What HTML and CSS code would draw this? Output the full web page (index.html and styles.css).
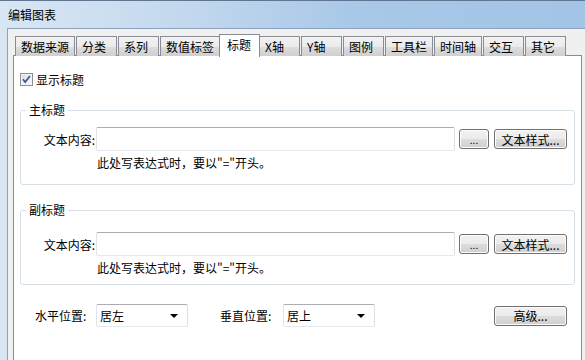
FILE: index.html
```html
<!DOCTYPE html>
<html lang="zh-CN">
  <head>
    <meta charset="UTF-8" />
    <meta name="viewport" content="width=device-width, initial-scale=1.0" />
    <title>编辑图表</title>
    <link rel="stylesheet" href="styles.css">
  </head>
  <body>
    <div class="window">
      <div class="titlebar">编辑图表</div>
      <div class="client">
        <!-- tabs -->
        <div class="tabs">
          <div class="tab">数据来源</div>
          <div class="tab">分类</div>
          <div class="tab">系列</div>
          <div class="tab">数值标签</div>
          <div class="tab active">标题</div>
          <div class="tab">X轴</div>
          <div class="tab">Y轴</div>
          <div class="tab">图例</div>
          <div class="tab">工具栏</div>
          <div class="tab">时间轴</div>
          <div class="tab">交互</div>
          <div class="tab">其它</div>
        </div>

        <div class="panel">
          <label class="check-row">
            <svg class="checkbox" width="13" height="13" viewBox="0 0 13 13">
              <defs>
                <linearGradient id="cbg" x1="0" y1="0" x2="1" y2="1">
                  <stop offset="0" stop-color="#dcdcdc" />
                  <stop offset="1" stop-color="#fbfbfb" />
                </linearGradient>
              </defs>
              <rect x="0.5" y="0.5" width="12" height="12" fill="#f4f4f4" stroke="#8f8f8f" />
              <rect x="2" y="2" width="9" height="9" fill="url(#cbg)" />
              <path d="M3 6.2 L5.2 9 L10 3" fill="none" stroke="#3d58a0" stroke-width="1.8" />
            </svg>
            <span>显示标题</span>
          </label>

          <fieldset class="group group-main">
            <legend>主标题</legend>
            <div class="field-row">
              <span class="field-label">文本内容:</span>
              <input class="textbox" type="text" value="" />
              <button class="btn btn-small">...</button>
              <button class="btn btn-style">文本样式...</button>
            </div>
            <div class="hint">此处写表达式时，要以"="开头。</div>
          </fieldset>

          <fieldset class="group group-sub">
            <legend>副标题</legend>
            <div class="field-row">
              <span class="field-label">文本内容:</span>
              <input class="textbox" type="text" value="" />
              <button class="btn btn-small">...</button>
              <button class="btn btn-style">文本样式...</button>
            </div>
            <div class="hint">此处写表达式时，要以"="开头。</div>
          </fieldset>

          <div class="position-row">
            <span class="pos-label">水平位置:</span>
            <div class="combo">居左</div>
            <span class="pos-label pos-label-v">垂直位置:</span>
            <div class="combo">居上</div>
            <button class="btn btn-style btn-adv">高级...</button>
          </div>
        </div>
      </div>
    </div>
  </body>
</html>
```

FILE: styles.css
```css
* {
  box-sizing: border-box;
}

body {
  margin: 0;
  font-family: "Noto Sans CJK SC", "Liberation Sans", sans-serif;
  font-size: 12px;
  color: #000;
  overflow: hidden;
}

.window {
  width: 585px;
  height: 360px;
  display: flex;
  flex-direction: column;
  background: linear-gradient(to right, #d9e6f3 0%, #c4d9ee 30%, #a9c8e8 60%, #a3c4e6 100%);
  border-top: 1px solid #5f7590;
}

.titlebar {
  height: 27px;
  line-height: 28px;
  padding-left: 8px;
  font-size: 12px;
}

.client {
  flex: 1;
  margin-left: 7px;
  background: #f0f0f0;
  border-top: 1px solid #8ea4bd;
  border-left: 1px solid #8ea4bd;
  padding: 5px 0 0 5px;
  overflow: hidden;
}

/* tab strip */
.tabs {
  display: flex;
  align-items: flex-end;
  gap: 1px;
  height: 22px;
  padding-left: 2px;
  position: relative;
  z-index: 1;
}

.tab {
  height: 20px;
  min-width: 41px;
  padding: 0 5px;
  line-height: 19px;
  border: 1px solid #898c95;
  border-bottom: none;
  background: linear-gradient(#f2f2f2, #ebebeb 50%, #dddddd 51%, #cfcfcf);
  white-space: nowrap;
}

.tab.active {
  height: 23px;
  margin: 0 -2px -1px;
  padding: 0 7px;
  line-height: 20px;
  background: #fff;
}

/* tab page */
.panel {
  width: 569px;
  height: 320px;
  margin-top: -1px;
  background: #fff;
  border: 1px solid #898c95;
  padding: 15px 6px 0;
}

.check-row {
  display: flex;
  align-items: center;
  gap: 3px;
  height: 16px;
}

.checkbox {
  display: block;
}

.group {
  margin: 15px 0 0;
  height: 83px;
  border: 1px solid #d5dfe5;
  border-radius: 3px;
  padding: 9px 7px 0 0;
}

.group legend {
  margin-left: 5px;
  padding: 0 3px;
  line-height: 16px;
}

.group-sub {
  margin-top: 17px;
  padding-top: 14px;
}

.field-row {
  display: flex;
  align-items: center;
}

.field-label {
  width: 75px;
  text-align: right;
  padding-right: 1px;
}

.textbox {
  width: 359px;
  height: 24px;
  margin: 0 0 0 0;
  border: 1px solid #abadb3;
  border-color: #abadb3 #dbdfe6 #e3e9ef #e2e3ea;
  border-radius: 2px;
  font: inherit;
  outline: none;
}

.btn {
  height: 20px;
  padding: 0;
  font: inherit;
  border: 1px solid #707070;
  border-radius: 3px;
  background: linear-gradient(#f2f2f2, #ebebeb 50%, #dddddd 51%, #cfcfcf);
  box-shadow: inset 0 0 0 1px #fcfcfc;
  color: #000;
}

.btn-small {
  width: 30px;
  margin-left: 4px;
  font-size: 10px;
}

.btn-style {
  width: 73px;
  margin-left: 5px;
}

.hint {
  margin-top: 4px;
  padding-left: 76px;
  line-height: 16px;
}

/* bottom row */
.position-row {
  display: flex;
  align-items: center;
  margin-top: 19px;
  padding-left: 15px;
}

.pos-label {
  flex: none;
  width: 61px;
}

.pos-label-v {
  margin-left: 32px;
  width: 63px;
}

.combo {
  position: relative;
  flex: none;
  width: 92px;
  height: 23px;
  line-height: 21px;
  padding-left: 3px;
  border: 1px solid #abadb3;
  border-color: #abadb3 #dbdfe6 #e3e9ef #e2e3ea;
  border-radius: 2px;
}

.combo::after {
  content: "";
  position: absolute;
  right: 9px;
  top: 9px;
  border-left: 4px solid transparent;
  border-right: 4px solid transparent;
  border-top: 4px solid #000;
}

.btn-adv {
  margin-left: auto;
  margin-right: 8px;
}
```
